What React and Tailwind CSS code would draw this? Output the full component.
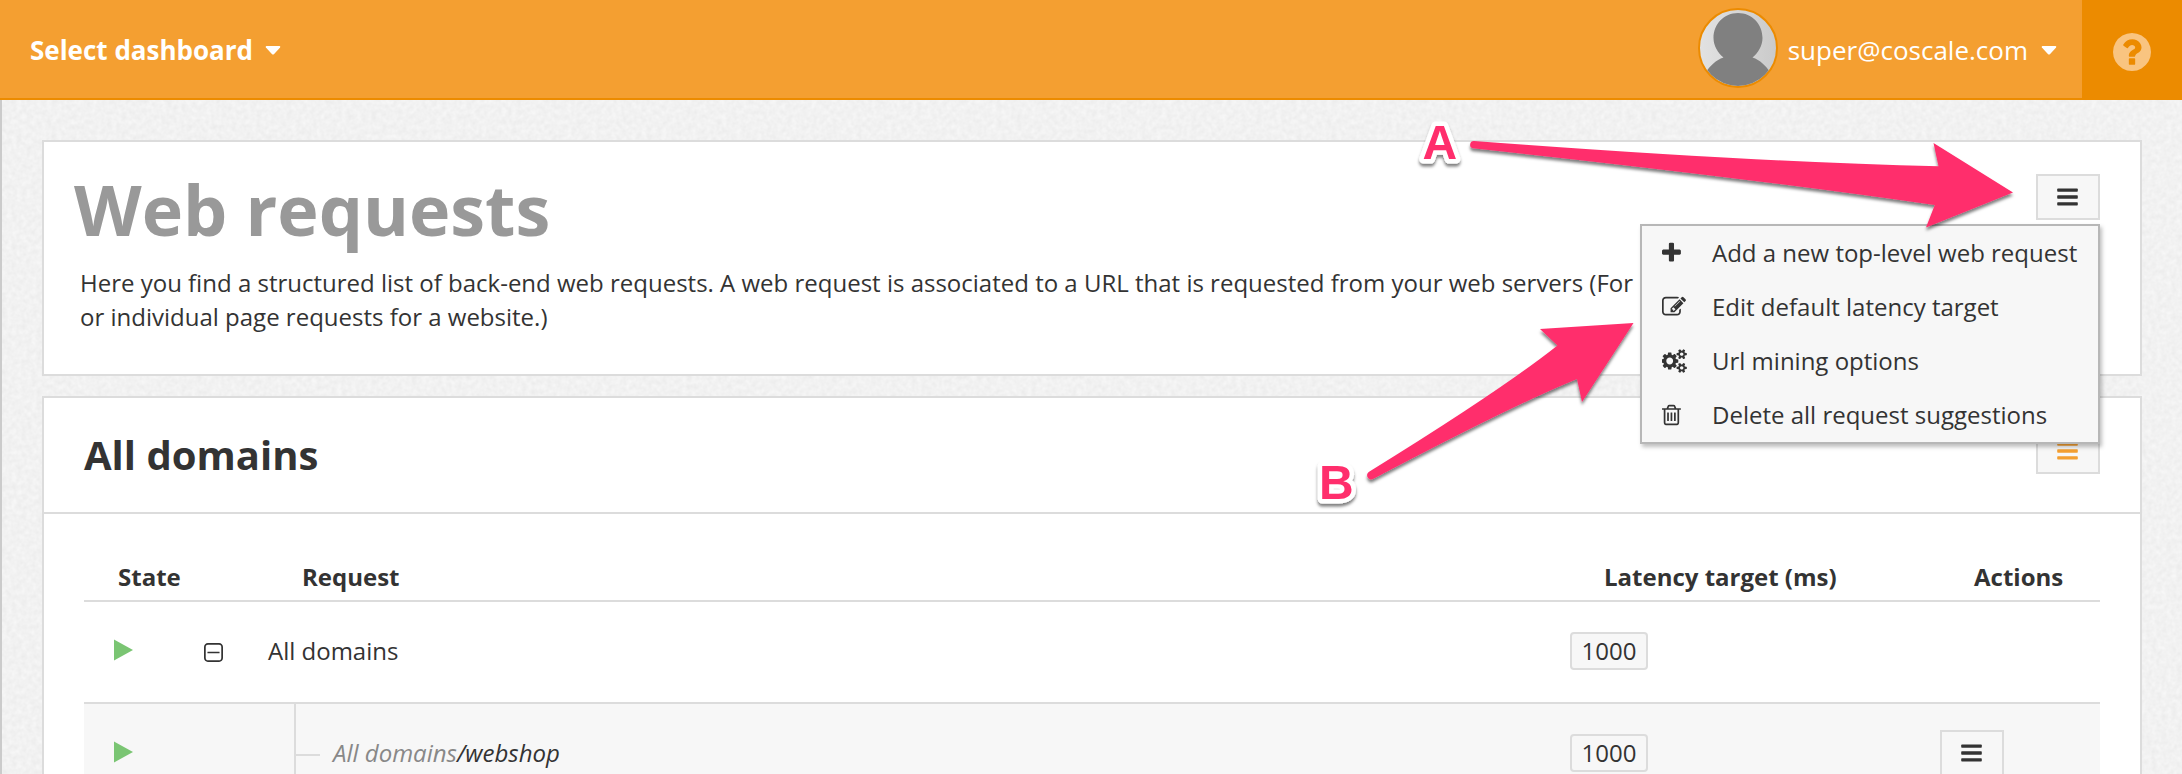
const ICONS = {
  plus: {
    box: "192 0 1408 1792",
    width: "w-[18.9px]",
    d: "M1600 736v192q0 40-28 68t-68 28h-416v416q0 40-28 68t-68 28h-192q-40 0-68-28t-28-68v-416h-416q-40 0-68-28t-28-68v-192q0-40 28-68t68-28h416v-416q0-40 28-68t68-28h192q40 0 68 28t28 68v416h416q40 0 68 28t28 68z",
  },
  edit: {
    box: "0 0 1792 1792",
    width: "w-6",
    d: "M888 1184l116-116-152-152-116 116v56h96v96h56zm440-720q-16-16-33 1l-350 350q-17 17-1 33t33-1l350-350q17-17 1-33zm80 594v190q0 119-84.5 203.5t-203.5 84.5h-832q-119 0-203.5-84.5t-84.5-203.5v-832q0-119 84.5-203.5t203.5-84.5h832q63 0 117 25 15 7 18 23 3 17-9 29l-49 49q-14 14-32 8-23-6-45-6h-832q-66 0-113 47t-47 113v832q0 66 47 113t113 47h832q66 0 113-47t47-113v-126q0-13 9-22l64-64q15-15 35-7t20 29zm-96-738l288 288-672 672h-288v-288zm444 132l-92 92-288-288 92-92q28-28 68-28t68 28l152 152q28 28 28 68t-28 68z",
  },
  cogs: {
    box: "0 0 1920 1792",
    width: "w-[25.7px]",
    d: "M832 896q0-106-75-181t-181-75-181 75-75 181 75 181 181 75 181-75 75-181zm768 512q0-52-38-90t-90-38-90 38-38 90q0 53 37.5 90.5t90.5 37.5 90.5-37.5 37.5-90.5zm0-1024q0-52-38-90t-90-38-90 38-38 90q0 53 37.5 90.5t90.5 37.5 90.5-37.5 37.5-90.5zm-384 421v185q0 10-7 19.5t-16 10.5l-155 24q-11 35-32 76 34 48 90 115 7 11 7 20 0 12-7 19-23 30-82.5 89.5t-78.5 59.5q-11 0-21-7l-115-90q-37 19-77 31-11 108-23 155-7 24-30 24h-186q-11 0-20-7.5t-10-17.5l-23-153q-34-10-75-31l-118 89q-7 7-20 7-11 0-21-8-144-133-144-160 0-9 7-19 10-14 41-53t47-61q-23-44-35-82l-152-24q-10-1-17-9.5t-7-19.5v-185q0-10 7-19.5t16-10.5l155-24q11-35 32-76-34-48-90-115-7-11-7-20 0-12 7-20 22-30 82-89t79-59q11 0 21 7l115 90q34-18 77-32 11-108 23-154 7-24 30-24h186q11 0 20 7.5t10 17.5l23 153q34 10 75 31l118-89q8-7 20-7 11 0 21 8 144 133 144 160 0 8-7 19-12 16-42 54t-45 60q23 48 34 82l152 23q10 2 17 10.5t7 19.5zm640 533v140q0 16-149 31-12 27-30 52 51 113 51 138 0 4-4 7-122 71-124 71-8 0-46-47t-52-68q-20 2-30 2t-30-2q-14 21-52 68t-46 47q-2 0-124-71-4-3-4-7 0-25 51-138-18-25-30-52-149-15-149-31v-140q0-16 149-31 13-29 30-52-51-113-51-138 0-4 4-7 4-2 35-20t59-34 30-16q8 0 46 46.5t52 67.5q20-2 30-2t30 2q51-71 92-112l6-2q4 0 124 70 4 3 4 7 0 25-51 138 17 23 30 52 149 15 149 31zm0-1024v140q0 16-149 31-12 27-30 52 51 113 51 138 0 4-4 7-122 71-124 71-8 0-46-47t-52-68q-20 2-30 2t-30-2q-14 21-52 68t-46 47q-2 0-124-71-4-3-4-7 0-25 51-138-18-25-30-52-149-15-149-31v-140q0-16 149-31 13-29 30-52-51-113-51-138 0-4 4-7 4-2 35-20t59-34 30-16q8 0 46 46.5t52 67.5q20-2 30-2t30 2q51-71 92-112l6-2q4 0 124 70 4 3 4 7 0 25-51 138 17 23 30 52 149 15 149 31z",
  },
  trash: {
    box: "192 0 1408 1792",
    width: "w-[18.9px]",
    d: "M704 736v576q0 14-9 23t-23 9h-64q-14 0-23-9t-9-23v-576q0-14 9-23t23-9h64q14 0 23 9t9 23zm256 0v576q0 14-9 23t-23 9h-64q-14 0-23-9t-9-23v-576q0-14 9-23t23-9h64q14 0 23 9t9 23zm256 0v576q0 14-9 23t-23 9h-64q-14 0-23-9t-9-23v-576q0-14 9-23t23-9h64q14 0 23 9t9 23zm128 724v-948h-896v948q0 22 7 40.5t14.5 27 10.5 8.5h832q3 0 10.5-8.5t14.5-27 7-40.5zm-672-1076h448l-48-117q-7-9-17-11h-317q-10 2-17 11zm928 32v64q0 14-9 23t-23 9h-96v948q0 83-47 143.5t-113 60.5h-832q-66 0-113-58.5t-47-141.5v-952h-96q-14 0-23-9t-9-23v-64q0-14 9-23t23-9h309l70-167q15-37 54-63t79-26h320q40 0 79 26t54 63l70 167h309q14 0 23 9t9 23z",
  },
};

const MENU = [
  ["plus", "Add a new top-level web request"],
  ["edit", "Edit default latency target"],
  ["cogs", "Url mining options"],
  ["trash", "Delete all request suggestions"],
];

function Icon({ name }) {
  const icon = ICONS[name];
  return (
    <svg viewBox={icon.box} className={`h-6 ${icon.width}`} fill="currentColor">
      <path d={icon.d} />
    </svg>
  );
}

function Caret() {
  return (
    <svg viewBox="0 0 16 9" className="h-[9px] w-4" fill="currentColor">
      <path d="M1.4 0h13.2q1.3.6.5 1.6L8.9 8.2q-.9.8-1.8 0L.9 1.6Q.1.6 1.4 0z" />
    </svg>
  );
}

function BarsButton({ className = "" }) {
  return (
    <button className={`flex h-[46px] w-16 shrink-0 items-center justify-center border-2 border-[#dcdcdc] bg-[#f7f7f7] pr-px ${className}`}>
      <svg viewBox="0 0 21 18" className="h-[18px] w-[21px]" fill="currentColor">
        <rect x="0.2" y="0.4" width="20.6" height="3.4" rx="0.8" />
        <rect x="0.2" y="7.3" width="20.6" height="3.4" rx="0.8" />
        <rect x="0.2" y="14.2" width="20.6" height="3.4" rx="0.8" />
      </svg>
    </button>
  );
}

function Play() {
  return (
    <svg viewBox="0 0 19 22" className="h-[22px] w-[19px]" fill="#7ac573">
      <path d="M0 0.5L19 11L0 21.5z" />
    </svg>
  );
}

function Target({ children }) {
  return (
    <span className="flex h-[38px] w-[78px] items-center justify-center rounded border-2 border-[#dcdcdc] bg-[#f7f7f7]">
      {children}
    </span>
  );
}

function Paper() {
  return (
    <svg className="absolute inset-0 h-full w-full">
      <filter id="grain" x="0" y="0" width="100%" height="100%" colorInterpolationFilters="sRGB">
        <feTurbulence type="fractalNoise" baseFrequency="0.2" numOctaves="2" seed="4" />
        <feColorMatrix values="0.06 0 0 0 0.917  0.06 0 0 0 0.917  0.06 0 0 0 0.917  0 0 0 0 1" />
      </filter>
      <rect width="100%" height="100%" filter="url(#grain)" />
    </svg>
  );
}

function Annotations() {
  return (
    <svg viewBox="0 0 2182 774" className="pointer-events-none absolute inset-0 z-20 h-[774px] w-[2182px]">
      <defs>
        <filter id="drop" x="-10%" y="-20%" width="120%" height="150%">
          <feDropShadow dx="0" dy="3" stdDeviation="1.6" floodColor="#000" floodOpacity="0.5" />
        </filter>
      </defs>
      <g fill="#ff2d6c" filter="url(#drop)">
        <path d="M1474 141Q1750 162 1938.500 166.300L1933.500 143L2013 192.500L1926 227.500L1934.800 205Q1740 177 1473 148.300A3.700 3.700 0 0 1 1474 141z" />
        <path d="M1369.500 471.500Q1500 391 1557.500 345.500L1540 329L1633.500 323L1582 402L1577 379Q1513 405 1373 479A4 4 0 0 1 1369.500 471.500z" />
      </g>
      <g
        className="font-['Liberation_Sans',Arial,sans-serif] text-[48px] font-bold"
        fill="#ff2d6c"
        stroke="#fff"
        strokeWidth="9"
        strokeLinejoin="round"
        paintOrder="stroke"
        filter="url(#drop)"
      >
        <text x="1422.500" y="158.500">A</text>
        <text x="1319" y="498.500">B</text>
      </g>
    </svg>
  );
}

export default function App() {
  return (
    <div className="relative flex h-[774px] w-[2182px] flex-col overflow-hidden bg-[#f2f2f2] font-['Open_Sans','Noto_Sans',sans-serif] text-2xl text-[#333]">
      <header className="flex h-[100px] shrink-0 text-[26px] text-white">
        <div className="flex flex-1 items-center justify-between border-b-2 border-[#ec8b00] bg-[#f49f31] pr-[25px] pl-[30px]">
          <div className="flex items-center gap-3 pt-[3px] font-bold">
            Select dashboard
            <Caret />
          </div>
          <div className="flex items-center gap-[10px]">
            <svg viewBox="0 0 80 80" className="mb-[2px] size-20">
              <defs>
                <clipPath id="face"><circle cx="40" cy="40" r="38" /></clipPath>
                <linearGradient id="tone"><stop offset="0" stopColor="#e2e2e2" /><stop offset="1" stopColor="#cacaca" /></linearGradient>
              </defs>
              <circle cx="40" cy="40" r="39" fill="url(#tone)" stroke="#ec8b00" strokeWidth="2" />
              <g clipPath="url(#face)" fill="#808080">
                <path d="M40 5C54 5 64.500 16 64.500 30C64.500 38 60 45 54.500 49.500C62 52 68 58 72 64L72 80L8 80L8 64C12 58 18 52 25.500 49.500C20 45 15.500 38 15.500 30C15.500 16 26 5 40 5z" />
              </g>
            </svg>
            <div className="flex items-center gap-[13px] pt-[3px]">
              super@coscale.com
              <Caret />
            </div>
          </div>
        </div>
        <div className="flex w-[100px] items-center justify-center bg-[#ec8b00] pt-1">
          <svg viewBox="128 128 1536 1536" className="size-[38px]" fill="#f9c480">
            <path d="M1024 1376v-192q0-14-9-23t-23-9h-192q-14 0-23 9t-9 23v192q0 14 9 23t23 9h192q14 0 23-9t9-23zm256-672q0-88-55.500-163t-138.500-116-170-41q-243 0-371 213-15 24 8 42l132 100q7 6 19 6 16 0 25-12 53-68 86-92 34-24 86-24 48 0 85.500 26t37.500 59q0 38-20 61t-68 45q-63 28-115.500 86.500t-52.500 125.500v36q0 14 9 23t23 9h192q14 0 23-9t9-23q0-19 21.500-49.500t54.500-49.500q32-18 49-28.500t46-35 44.500-48 28-60.500 12.500-81zm384 192q0 209-103 385.500t-279.500 279.500-385.500 103-385.500-103-279.500-279.500-103-385.500 103-385.500 279.500-279.500 385.500-103 385.500 103 279.500 279.500 103 385.500z" />
          </svg>
        </div>
      </header>

      <main className="relative flex flex-1 flex-col border-l-2 border-[#cbcbcb]">
        <Paper />
        <div className="relative flex flex-1 flex-col gap-5 px-10 pt-10">
          <section className="flex h-[236px] shrink-0 justify-between border-2 border-[#dcdcdc] bg-white pt-8 pr-10">
            <div>
              <h1 className="pl-[30px] text-[70px] leading-[70px] font-bold text-[#999]">Web requests</h1>
              <p className="mt-[22px] pl-9 leading-[34px] whitespace-nowrap">
                Here you find a structured list of back-end web requests. A web request is associated to a URL that is requested from your web servers (For
                <br />
                or individual page requests for a website.)
              </p>
            </div>
            <div className="relative">
              <BarsButton />
              <ul className="absolute top-[50px] right-0 z-10 w-[460px] border-2 border-[#b7b7b7] bg-[#f7f7f7] shadow-[2px_3px_4px_rgba(0,0,0,0.25)]">
                {MENU.map(([icon, label]) => (
                  <li key={icon} className="flex h-[54px] items-center pl-5 whitespace-nowrap">
                    <span className="w-[50px] shrink-0"><Icon name={icon} /></span>
                    {label}
                  </li>
                ))}
              </ul>
            </div>
          </section>

          <section className="h-[420px] shrink-0 border-2 border-[#dcdcdc] bg-white">
            <div className="flex h-[116px] items-center justify-between border-b-2 border-[#dcdcdc] px-10">
              <h2 className="text-[40px] leading-[56px] font-bold">All domains</h2>
              <BarsButton className="mb-2 text-[#f49f31]" />
            </div>
            <div className="mx-10 pt-[48px]">
              <div className="grid h-10 grid-cols-[218px_1221px_333px_1fr] border-b-2 border-[#dcdcdc] font-bold leading-[30px]">
                <span className="pl-[34px]">State</span>
                <span>Request</span>
                <span className="pl-[81px]">Latency target (ms)</span>
                <span className="pl-[118px]">Actions</span>
              </div>
              <div className="grid h-[102px] grid-cols-[120px_64px_1302px_1fr] items-center border-b-2 border-[#dcdcdc]">
                <span className="pb-1 pl-[30px]"><Play /></span>
                <svg viewBox="192 128 1408 1408" className="size-[19px]">
                  <path d="M1344 800v64q0 14-9 23t-23 9h-832q-14 0-23-9t-9-23v-64q0-14 9-23t23-9h832q14 0 23 9t9 23zm128 448v-832q0-66-47-113t-113-47h-832q-66 0-113 47t-47 113v832q0 66 47 113t113 47h832q66 0 113-47t47-113zm128-832v832q0 119-84.500 203.500t-203.500 84.500h-832q-119 0-203.500-84.500t-84.500-203.500v-832q0-119 84.500-203.500t203.500-84.500h832q119 0 203.500 84.500t84.500 203.500z" fill="#333" />
                </svg>
                <span className="pb-[2px]">All domains</span>
                <span className="pb-[2px]"><Target>1000</Target></span>
              </div>
              <div className="grid h-[100px] grid-cols-[210px_26px_13px_1237px_370px_1fr] items-center bg-[#f7f7f7]">
                <span className="pb-1 pl-[30px]"><Play /></span>
                <span className="flex h-full items-center border-l-2 border-[#dcdcdc] pt-[2px]">
                  <span className="h-[2px] w-full bg-[#dcdcdc]" />
                </span>
                <span />
                <span className="pb-[2px] italic"><span className="text-[#888]">All domains</span>/webshop</span>
                <span className="pb-[2px]"><Target>1000</Target></span>
                <span className="pb-[2px]"><BarsButton /></span>
              </div>
            </div>
          </section>
        </div>
      </main>
      <Annotations />
    </div>
  );
}
